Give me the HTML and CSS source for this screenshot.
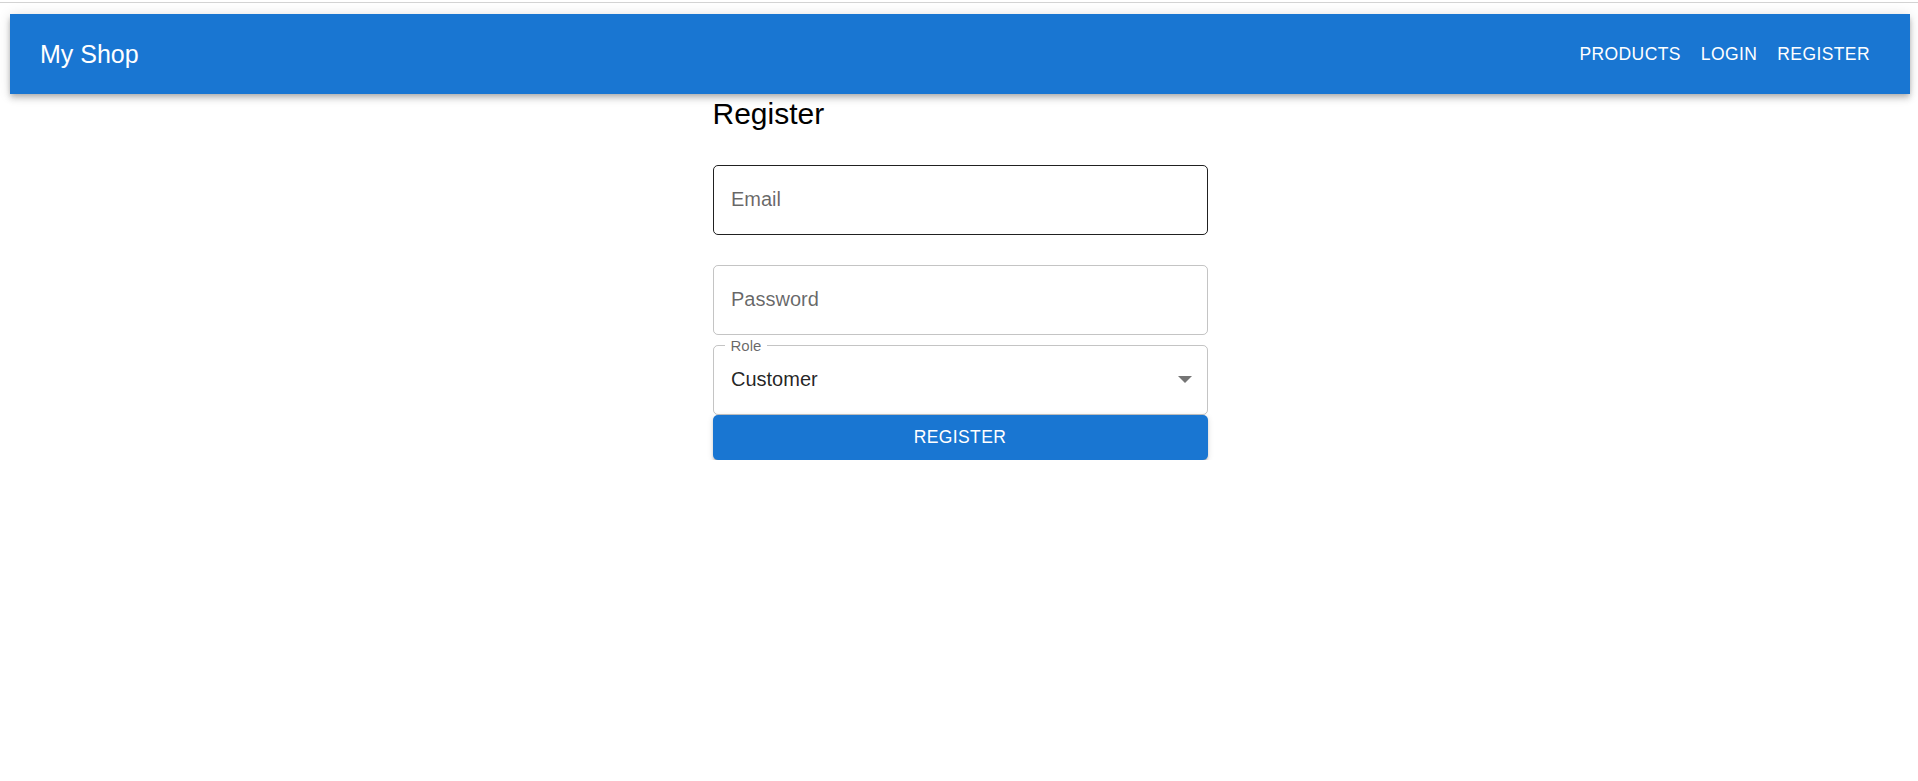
FILE: index.html
```html
<!DOCTYPE html>
<html lang="en">
<head>
<meta charset="utf-8">
<title>My Shop</title>
<link rel="stylesheet" href="styles.css">
</head>
<body>
<div class="chrome-line"></div>
<div class="page">
  <header class="appbar">
    <div class="toolbar">
      <div class="brand">My Shop</div>
      <nav class="nav">
        <a class="nav-btn">Products</a>
        <a class="nav-btn">Login</a>
        <a class="nav-btn">Register</a>
      </nav>
    </div>
  </header>
  <main class="container">
    <h1 class="title">Register</h1>
    <div class="field field-active"><span class="placeholder">Email</span></div>
    <div class="field"><span class="placeholder">Password</span></div>
    <div class="field field-select">
      <span class="float-label">Role</span>
      <span class="value">Customer</span>
      <svg class="caret" width="14" height="7" viewBox="0 0 14 7"><path d="M0 0h14L7 7z" fill="#757575"/></svg>
    </div>
    <button class="btn">Register</button>
  </main>
</div>
</body>
</html>
```

FILE: styles.css
```css
html, body {
  margin: 0;
  padding: 0;
  background: #fff;
  font-family: "Liberation Sans", Arial, Helvetica, sans-serif;
}

.chrome-line {
  height: 1px;
  margin-top: 2px;
  background: #d3d3d3;
}

.page {
  padding: 11px 8px 0 10px;
}

.appbar {
  background: #1976d2;
  color: #fff;
  box-shadow: 0 2.5px 5px -1.25px rgba(0,0,0,0.2), 0 5px 6px 0 rgba(0,0,0,0.14), 0 1.25px 12.5px 0 rgba(0,0,0,0.12);
}

.toolbar {
  display: flex;
  align-items: center;
  justify-content: space-between;
  height: 80px;
  padding: 0 30px;
}

.brand {
  font-size: 25px;
  line-height: 1.6;
}

.nav {
  display: flex;
}

.nav-btn {
  font-size: 17.5px;
  line-height: 1.75;
  letter-spacing: 0.4px;
  text-transform: uppercase;
  padding: 7.5px 10px;
  color: #fff;
}

.container {
  width: 495px;
  margin: 0 auto;
  display: flex;
  flex-direction: column;
}

.title {
  margin: 0 0 10.5px;
  font-size: 30px;
  line-height: 40px;
  font-weight: 400;
  color: #000;
}

.field {
  position: relative;
  box-sizing: border-box;
  height: 70px;
  margin: 20px 0 10px;
  padding: 0 17.5px;
  display: flex;
  align-items: center;
  border: 1px solid rgba(0,0,0,0.23);
  border-radius: 5px;
  font-size: 20px;
}

.field-active {
  border-color: rgba(0,0,0,0.87);
}

.field-select {
  margin: 0;
  justify-content: space-between;
  padding-right: 15px;
}

.placeholder {
  color: rgba(0,0,0,0.6);
}

.value {
  color: rgba(0,0,0,0.87);
}

.float-label {
  position: absolute;
  top: -11px;
  left: 11px;
  padding: 0 6px;
  background: #fff;
  font-size: 15px;
  line-height: 21.5px;
  color: rgba(0,0,0,0.6);
}

.caret {
  display: block;
}

.btn {
  display: block;
  width: 100%;
  height: 45.6px;
  border: none;
  border-radius: 5px;
  background: #1976d2;
  color: #fff;
  font-family: inherit;
  font-size: 17.5px;
  letter-spacing: 0.4px;
  text-transform: uppercase;
  box-shadow: 0 3.75px 1.25px -2.5px rgba(0,0,0,0.2), 0 2.5px 2.5px 0 rgba(0,0,0,0.14), 0 1.25px 6.25px 0 rgba(0,0,0,0.12);
}
```
